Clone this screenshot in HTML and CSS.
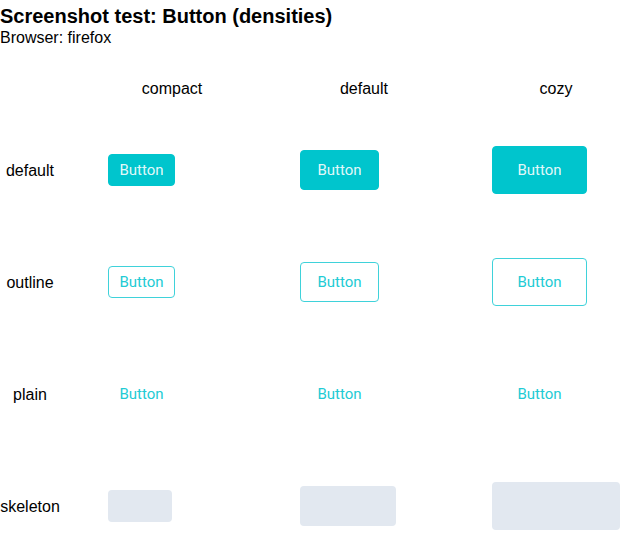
FILE: index.html
```html
<!DOCTYPE html>
<html>
<head>
<meta charset="utf-8">
<link rel="stylesheet" href="styles.css">
</head>
<body>
<h1 class="title">Screenshot test: Button (densities)</h1>
<div class="subtitle">Browser: firefox</div>
<div class="thead">
  <div></div>
  <div class="col-head">compact</div>
  <div class="col-head">default</div>
  <div class="col-head">cozy</div>
</div>
<div class="tbody">
  <div class="row-label">default</div>
  <div class="cell"><button class="btn btn-fill d-compact">Button</button></div>
  <div class="cell"><button class="btn btn-fill d-default">Button</button></div>
  <div class="cell"><button class="btn btn-fill d-cozy">Button</button></div>

  <div class="row-label">outline</div>
  <div class="cell"><button class="btn btn-outline d-compact">Button</button></div>
  <div class="cell"><button class="btn btn-outline d-default">Button</button></div>
  <div class="cell"><button class="btn btn-outline d-cozy">Button</button></div>

  <div class="row-label">plain</div>
  <div class="cell"><button class="btn btn-plain d-compact">Button</button></div>
  <div class="cell"><button class="btn btn-plain d-default">Button</button></div>
  <div class="cell"><button class="btn btn-plain d-cozy">Button</button></div>

  <div class="row-label">skeleton</div>
  <div class="cell"><div class="skeleton s-compact"></div></div>
  <div class="cell"><div class="skeleton s-default"></div></div>
  <div class="cell"><div class="skeleton s-cozy"></div></div>
</div>
</body>
</html>
```
FILE: styles.css
```css
html, body {
  margin: 0;
  padding: 0;
  background: #ffffff;
}
body {
  font-family: "Liberation Sans", Arial, sans-serif;
  color: #000000;
  font-size: 16px;
}
.title {
  margin: 4px 0 0 0;
  font-size: 20px;
  line-height: 24px;
  font-weight: bold;
}
.subtitle {
  margin-top: 1px;
  font-size: 16px;
  line-height: normal;
  height: 18px;
}
.thead,
.tbody {
  display: grid;
  grid-template-columns: 108px 192px 192px 128px;
}
.thead {
  margin-top: 33px;
  height: 18px;
}
.col-head {
  width: 128px;
  text-align: center;
  line-height: normal;
}
.tbody {
  margin-top: 48px;
  grid-auto-rows: 48px;
  row-gap: 64px;
}
.row-label {
  width: 60px;
  text-align: center;
  align-self: center;
  padding-top: 2px;
  line-height: normal;
  white-space: nowrap;
}
.cell {
  display: flex;
  align-items: center;
}
.btn {
  box-sizing: border-box;
  display: flex;
  align-items: center;
  justify-content: center;
  margin: 0;
  padding: 0;
  border: 1px solid transparent;
  border-radius: 4px;
  font-family: Roboto, "Open Sans", sans-serif;
  font-size: 15px;
  font-weight: 400;
  background: transparent;
}
.btn-fill {
  background: #00c5cd;
  border-color: #00c5cd;
  color: rgba(255, 255, 255, 0.9);
}
.btn-outline {
  background: #ffffff;
  border-color: #3fd2da;
  color: #22cbd4;
}
.btn-plain {
  color: #22cbd4;
}
.d-compact { width: 67px; height: 32px; }
.d-default { width: 79px; height: 40px; }
.d-cozy { width: 95px; height: 48px; }
.skeleton {
  background: #e2e8f0;
  border-radius: 4px;
}
.s-compact { width: 64px; height: 32px; }
.s-default { width: 96px; height: 40px; }
.s-cozy { width: 128px; height: 48px; }
```
